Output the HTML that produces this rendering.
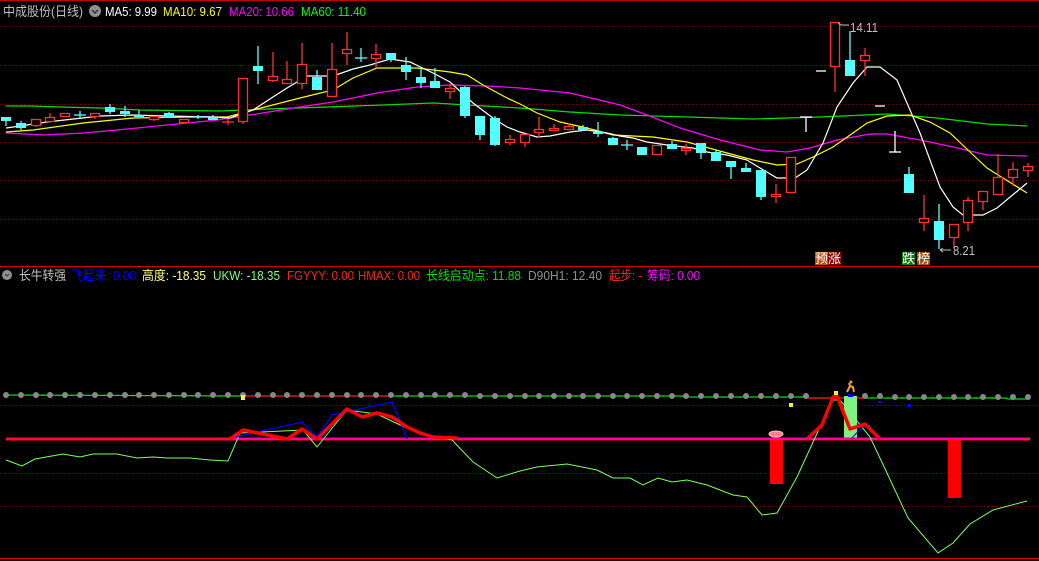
<!DOCTYPE html>
<html><head><meta charset="utf-8"><style>
html,body{margin:0;padding:0;background:#000;width:1039px;height:561px;overflow:hidden}
svg{display:block}
text{font-family:"Liberation Sans","Noto Sans CJK SC",sans-serif;font-size:13px}
</style></head><body>
<svg width="1039" height="561" viewBox="0 0 1039 561" xmlns="http://www.w3.org/2000/svg">
<rect width="1039" height="561" fill="#000"/>
<line x1="0" y1="0.5" x2="1039" y2="0.5" stroke="#c00000"/>
<line x1="0" y1="266.5" x2="1039" y2="266.5" stroke="#d00000"/>
<line x1="0" y1="558.5" x2="1039" y2="558.5" stroke="#d00000"/>
<g stroke="#800000" stroke-dasharray="1,3">
<line x1="0" y1="26.5" x2="1039" y2="26.5"/><line x1="0" y1="65.5" x2="1039" y2="65.5"/>
<line x1="0" y1="104.5" x2="1039" y2="104.5"/><line x1="0" y1="142.5" x2="1039" y2="142.5"/>
<line x1="0" y1="180.5" x2="1039" y2="180.5"/><line x1="0" y1="219.5" x2="1039" y2="219.5"/>
<line x1="0" y1="405.5" x2="1039" y2="405.5"/><line x1="0" y1="473.5" x2="1039" y2="473.5"/>
<line x1="0" y1="506.5" x2="1039" y2="506.5"/>
</g>
<text x="3" y="16" fill="#c0c0c0" textLength="80" lengthAdjust="spacingAndGlyphs">中成股份(日线)</text>
<circle cx="95" cy="11" r="6" fill="#909090"/><path d="M92 10l3 3 3-3" stroke="#333" stroke-width="1.5" fill="none"/>
<text x="105" y="16" fill="#fff" textLength="52" lengthAdjust="spacingAndGlyphs">MA5: 9.99</text>
<text x="163" y="16" fill="#ffff00" textLength="59" lengthAdjust="spacingAndGlyphs">MA10: 9.67</text>
<text x="229" y="16" fill="#ff00ff" textLength="65" lengthAdjust="spacingAndGlyphs">MA20: 10.66</text>
<text x="301" y="16" fill="#00ff00" textLength="65" lengthAdjust="spacingAndGlyphs">MA60: 11.40</text>
<g fill="none" stroke-width="1.2">
<polyline stroke="#00e000" points="6,106 30,106 60,107 100,108 140,110 220,111 267,109 327,107 383,105 433,103 520,108 570,112 620,115 687,117 753,119 820,117 887,114 937,118 987,124 1027,126"/>
<polyline stroke="#ff00ff" points="6,133 43,135 83,133 117,130 167,125 217,120 250,115 293,108 333,102 377,93 417,87 450,85 487,86 520,88 570,93 620,105 647,115 680,128 720,140 760,150 787,152 810,148 837,140 870,134 887,134 920,140 953,147 987,155 1027,156"/>
<polyline stroke="#ffff00" points="6,132 33,130 83,123 133,118 187,117 227,117 253,110 300,98 333,90 353,78 377,68 417,68 450,72 467,75 483,85 507,98 520,104 537,113 560,122 587,128 613,135 653,137 687,142 727,153 753,160 777,165 797,164 813,157 833,147 853,133 867,123 887,116 910,115 930,122 950,133 970,152 987,168 1003,178 1027,193"/>
<polyline stroke="#ffffff" points="6,128 20,126 47,122 100,116 133,115 167,116 213,117 230,118 253,110 273,97 287,88 307,76 333,76 353,69 370,65 390,59 410,62 433,73 450,82 473,103 493,118 507,127 520,132 537,137 550,136 570,132 587,130 607,133 620,136 633,138 647,142 667,145 693,148 707,152 727,155 747,160 760,168 777,178 795,178 807,170 823,143 837,107 853,83 867,67 880,67 897,80 920,133 940,187 953,207 963,215 983,215 997,208 1027,183"/>
</g>
<g stroke="#54ffff" stroke-width="1.3">
<line x1="6" y1="117" x2="6" y2="126"/><line x1="21" y1="121" x2="21" y2="130"/><line x1="80" y1="111" x2="80" y2="119"/><line x1="74" y1="115" x2="86" y2="115"/>
<line x1="110" y1="104" x2="110" y2="114"/><line x1="125" y1="106" x2="125" y2="117"/><line x1="139" y1="110" x2="139" y2="118"/><line x1="169" y1="112" x2="169" y2="118"/>
<line x1="198" y1="115" x2="198" y2="119"/><line x1="193" y1="117" x2="203" y2="117"/><line x1="213" y1="115" x2="213" y2="120"/>
<line x1="258" y1="46" x2="258" y2="84"/><line x1="317" y1="70" x2="317" y2="90"/><line x1="361" y1="48" x2="361" y2="62"/><line x1="355" y1="58" x2="367" y2="58"/>
<line x1="391" y1="53" x2="391" y2="62"/><line x1="406" y1="57" x2="406" y2="80"/><line x1="421" y1="68" x2="421" y2="88"/><line x1="435" y1="68" x2="435" y2="88"/>
<line x1="465" y1="86" x2="465" y2="118"/><line x1="480" y1="116" x2="480" y2="140"/><line x1="495" y1="116" x2="495" y2="146"/>
<line x1="583" y1="125" x2="583" y2="131"/><line x1="598" y1="122" x2="598" y2="137"/><line x1="613" y1="137" x2="613" y2="145"/>
<line x1="627" y1="140" x2="627" y2="150"/><line x1="621" y1="145" x2="633" y2="145"/><line x1="642" y1="147" x2="642" y2="155"/>
<line x1="672" y1="141" x2="672" y2="149"/><line x1="701" y1="143" x2="701" y2="159"/><line x1="716" y1="150" x2="716" y2="161"/>
<line x1="731" y1="161" x2="731" y2="179"/><line x1="746" y1="163" x2="746" y2="172"/><line x1="761" y1="170" x2="761" y2="200"/>
<line x1="850" y1="31" x2="850" y2="76"/><line x1="909" y1="167" x2="909" y2="193"/><line x1="939" y1="204" x2="939" y2="249"/>
</g>
<g fill="#54ffff">
<rect x="1" y="117" width="10" height="4"/><rect x="16" y="123" width="10" height="5"/><rect x="105" y="107" width="10" height="5"/>
<rect x="120" y="111" width="10" height="3"/><rect x="134" y="115" width="10" height="2"/><rect x="164" y="113" width="10" height="5"/>
<rect x="208" y="117" width="10" height="3"/><rect x="253" y="66" width="10" height="5"/><rect x="312" y="77" width="10" height="13"/>
<rect x="386" y="53" width="10" height="6"/><rect x="401" y="65" width="10" height="7"/><rect x="416" y="77" width="10" height="6"/>
<rect x="430" y="81" width="10" height="7"/><rect x="460" y="87" width="10" height="29"/><rect x="475" y="116" width="10" height="19"/>
<rect x="490" y="118" width="10" height="27"/><rect x="578" y="127" width="10" height="3"/><rect x="593" y="132" width="10" height="2"/>
<rect x="608" y="138" width="10" height="7"/><rect x="637" y="147" width="10" height="8"/><rect x="667" y="144" width="10" height="5"/>
<rect x="696" y="143" width="10" height="10"/><rect x="711" y="152" width="10" height="9"/><rect x="726" y="161" width="10" height="6"/>
<rect x="741" y="168" width="10" height="4"/><rect x="756" y="170" width="10" height="27"/><rect x="845" y="60" width="10" height="16"/>
<rect x="904" y="174" width="10" height="19"/><rect x="934" y="221" width="10" height="19"/>
</g>
<g stroke="#ff3232" stroke-width="1.3">
<line x1="36" y1="119" x2="36" y2="127"/><line x1="50" y1="113" x2="50" y2="122"/><line x1="95" y1="113" x2="95" y2="119"/>
<line x1="154" y1="116" x2="154" y2="121"/><line x1="228" y1="119" x2="228" y2="125"/><line x1="222" y1="122" x2="234" y2="122"/>
<line x1="243" y1="78" x2="243" y2="124"/><line x1="273" y1="52" x2="273" y2="82"/><line x1="287" y1="61" x2="287" y2="84"/>
<line x1="302" y1="43" x2="302" y2="89"/><line x1="332" y1="43" x2="332" y2="97"/><line x1="347" y1="32" x2="347" y2="65"/>
<line x1="376" y1="44" x2="376" y2="68"/><line x1="450" y1="84" x2="450" y2="99"/><line x1="510" y1="135" x2="510" y2="145"/>
<line x1="525" y1="134" x2="525" y2="147"/><line x1="539" y1="117" x2="539" y2="138"/><line x1="554" y1="124" x2="554" y2="131"/>
<line x1="569" y1="123" x2="569" y2="130"/><line x1="686" y1="144" x2="686" y2="155"/><line x1="776" y1="184" x2="776" y2="203"/>
<line x1="835" y1="22" x2="835" y2="92"/><line x1="865" y1="48" x2="865" y2="76"/><line x1="924" y1="195" x2="924" y2="231"/>
<line x1="954" y1="224" x2="954" y2="248"/><line x1="968" y1="197" x2="968" y2="231"/><line x1="983" y1="191" x2="983" y2="210"/>
<line x1="998" y1="154" x2="998" y2="195"/><line x1="1013" y1="162" x2="1013" y2="186"/><line x1="1028" y1="163" x2="1028" y2="177"/>
</g>
<g fill="#000" stroke="#ff3232" stroke-width="1.3">
<rect x="31.5" y="119.5" width="9" height="6"/><rect x="45.5" y="117.5" width="9" height="4"/><rect x="60.5" y="113.5" width="9" height="3"/>
<rect x="90.5" y="113.5" width="9" height="3"/><rect x="149.5" y="116.5" width="9" height="3"/><rect x="179.5" y="119.5" width="9" height="3"/>
<rect x="238.5" y="78.5" width="9" height="43"/><rect x="268.5" y="76.5" width="9" height="4"/><rect x="282.5" y="79.5" width="9" height="4"/>
<rect x="297.5" y="64.5" width="9" height="19"/><rect x="327.5" y="69.5" width="9" height="27"/><rect x="342.5" y="49.5" width="9" height="4"/>
<rect x="371.5" y="54.5" width="9" height="4"/><rect x="445.5" y="88.5" width="9" height="3"/><rect x="505.5" y="139.5" width="9" height="3"/>
<rect x="520.5" y="134.5" width="9" height="8"/><rect x="534.5" y="129.5" width="9" height="3"/><rect x="549.5" y="128.5" width="9" height="2"/>
<rect x="564.5" y="126.5" width="9" height="3"/><rect x="652.5" y="145.5" width="9" height="9"/><rect x="681.5" y="148.5" width="9" height="2"/>
<rect x="771.5" y="194.5" width="9" height="2"/><rect x="786.5" y="157.5" width="9" height="35"/><rect x="830.5" y="22.5" width="9" height="44"/>
<rect x="860.5" y="55.5" width="9" height="5"/><rect x="919.5" y="218.5" width="9" height="4"/><rect x="949.5" y="224.5" width="9" height="13"/>
<rect x="963.5" y="200.5" width="9" height="22"/><rect x="978.5" y="191.5" width="9" height="10"/><rect x="993.5" y="177.5" width="9" height="17"/>
<rect x="1008.5" y="169.5" width="9" height="8"/><rect x="1023.5" y="166.5" width="9" height="4"/>
</g>
<g stroke="#fff" stroke-width="1.3">
<line x1="806" y1="117" x2="806" y2="132"/><line x1="800" y1="117" x2="812" y2="117"/>
<line x1="816" y1="71" x2="826" y2="71"/><line x1="875" y1="106" x2="885" y2="106"/>
<line x1="895" y1="131" x2="895" y2="152"/><line x1="889" y1="152" x2="901" y2="152"/>
</g>
<text x="850" y="32" fill="#c0c0c0" font-size="12" textLength="28" lengthAdjust="spacingAndGlyphs">14.11</text>
<path d="M838 23l3 2h8" stroke="#c0c0c0" fill="none"/>
<text x="953" y="255" fill="#c0c0c0" font-size="12" textLength="22" lengthAdjust="spacingAndGlyphs">8.21</text>
<path d="M940 250h11M940 250l3-2M940 250l3 2" stroke="#c0c0c0" fill="none"/>
<rect x="815" y="252" width="13" height="13" fill="#b8500f"/><rect x="828" y="252" width="13" height="13" fill="#8b0000"/>
<text x="815" y="263" fill="#fff" font-size="12" textLength="26" lengthAdjust="spacingAndGlyphs">预涨</text>
<rect x="902" y="252" width="13" height="13" fill="#0a7a0a"/><rect x="917" y="252" width="13" height="13" fill="#8b4a10"/>
<text x="902" y="263" fill="#fff" font-size="12">跌</text><text x="917" y="263" fill="#fff" font-size="12">榜</text>
<circle cx="7" cy="275" r="5" fill="#909090"/><path d="M5 274l2 2 2-2" stroke="#333" fill="none"/>
<g font-size="12">
<text x="19" y="280" fill="#c0c0c0" textLength="47" lengthAdjust="spacingAndGlyphs">长牛转强</text>
<text x="71" y="280" fill="#0000ff" textLength="65" lengthAdjust="spacingAndGlyphs">飞起来: 0.00</text>
<text x="142" y="280" fill="#ffff80" textLength="64" lengthAdjust="spacingAndGlyphs">高度: -18.35</text>
<text x="213" y="280" fill="#80ff80" textLength="67" lengthAdjust="spacingAndGlyphs">UKW: -18.35</text>
<text x="287" y="280" fill="#ff2020" textLength="67" lengthAdjust="spacingAndGlyphs">FGYYY: 0.00</text>
<text x="358" y="280" fill="#ff2020" textLength="62" lengthAdjust="spacingAndGlyphs">HMAX: 0.00</text>
<text x="426" y="280" fill="#00e000" textLength="95" lengthAdjust="spacingAndGlyphs">长线启动点: 11.88</text>
<text x="528" y="280" fill="#909090" textLength="74" lengthAdjust="spacingAndGlyphs">D90H1: 12.40</text>
<text x="609" y="280" fill="#ff2020" textLength="33" lengthAdjust="spacingAndGlyphs">起步: -</text>
<text x="647" y="280" fill="#ff00ff" textLength="53" lengthAdjust="spacingAndGlyphs">筹码: 0.00</text>
</g>
<g fill="none">
<polyline stroke="#00e000" stroke-width="1.2" points="6,395 243,396"/>
<polyline stroke="#ff2020" stroke-width="1.2" points="243,396 392,396"/>
<polyline stroke="#00e000" stroke-width="1.2" points="392,396 680,396 685,397 807,397"/>
<polyline stroke="#ff2020" stroke-width="1.2" points="807,398 865,398"/>
<polyline stroke="#00e000" stroke-width="1.2" points="865,398 1005,398 1008,399 1028,399"/>
</g>
<g fill="#888">
<circle cx="6" cy="395" r="3"/><circle cx="21" cy="395" r="3"/><circle cx="36" cy="395" r="3"/><circle cx="50" cy="395" r="3"/><circle cx="65" cy="395" r="3"/><circle cx="80" cy="395" r="3"/><circle cx="95" cy="395" r="3"/><circle cx="110" cy="395" r="3"/><circle cx="125" cy="395" r="3"/><circle cx="139" cy="395" r="3"/><circle cx="154" cy="395" r="3"/><circle cx="169" cy="395" r="3"/><circle cx="184" cy="395" r="3"/><circle cx="198" cy="395" r="3"/><circle cx="213" cy="395" r="3"/><circle cx="228" cy="395" r="3"/><circle cx="243" cy="395" r="3"/><circle cx="258" cy="395" r="3"/><circle cx="273" cy="395" r="3"/><circle cx="287" cy="395" r="3"/><circle cx="302" cy="395" r="3"/><circle cx="317" cy="395" r="3"/><circle cx="332" cy="395" r="3"/><circle cx="347" cy="395" r="3"/><circle cx="361" cy="395" r="3"/><circle cx="376" cy="395" r="3"/><circle cx="391" cy="395" r="3"/><circle cx="406" cy="395" r="3"/><circle cx="421" cy="395" r="3"/><circle cx="435" cy="395" r="3"/><circle cx="450" cy="395" r="3"/><circle cx="465" cy="395" r="3"/><circle cx="480" cy="396" r="3"/><circle cx="495" cy="396" r="3"/><circle cx="510" cy="396" r="3"/><circle cx="525" cy="396" r="3"/><circle cx="539" cy="396" r="3"/><circle cx="554" cy="396" r="3"/><circle cx="569" cy="396" r="3"/><circle cx="583" cy="396" r="3"/><circle cx="598" cy="396" r="3"/><circle cx="613" cy="396" r="3"/><circle cx="627" cy="396" r="3"/><circle cx="642" cy="396" r="3"/><circle cx="657" cy="396" r="3"/><circle cx="672" cy="396" r="3"/><circle cx="686" cy="396" r="3"/><circle cx="701" cy="396" r="3"/><circle cx="716" cy="396" r="3"/><circle cx="731" cy="396" r="3"/><circle cx="746" cy="396" r="3"/><circle cx="761" cy="396" r="3"/><circle cx="776" cy="396" r="3"/><circle cx="791" cy="396" r="3"/><circle cx="806" cy="396" r="3"/><circle cx="865" cy="396" r="3"/><circle cx="880" cy="396" r="3"/><circle cx="895" cy="397" r="3"/><circle cx="909" cy="397" r="3"/><circle cx="924" cy="397" r="3"/><circle cx="939" cy="397" r="3"/><circle cx="954" cy="397" r="3"/><circle cx="968" cy="397" r="3"/><circle cx="983" cy="397" r="3"/><circle cx="998" cy="397" r="3"/><circle cx="1013" cy="397" r="3"/><circle cx="1028" cy="397" r="3"/>
</g>
<rect x="844" y="396" width="13" height="43" fill="#80f080"/>
<rect x="770" y="439" width="13" height="45" fill="#ff0000"/>
<rect x="948" y="439" width="13" height="59" fill="#ff0000"/>
<line x1="6" y1="439" x2="1030" y2="439" stroke="#ff0a2a" stroke-width="3"/>
<line x1="230" y1="439" x2="1030" y2="439" stroke="#ff00ff" stroke-width="1"/>
<polyline fill="none" stroke="#80ff60" stroke-width="1" points="6,460 22,466 35,459 63,454 80,457 93,454 117,454 137,458 153,457 167,458 190,458 210,460 228,461 240,433 303,430 317,447 333,427 347,410 377,414 400,425 420,434 452,440 473,462 497,478 520,471 537,467 567,464 597,470 613,478 630,478 643,485 658,478 672,482 687,480 707,485 733,495 747,497 762,515 777,513 797,477 820,427 832,400 840,400 870,437 887,473 908,518 938,553 953,543 970,524 993,510 1027,501"/>
<polyline fill="none" stroke="#0000ff" stroke-width="1.2" points="230,438 253,433 302,422 317,437 332,415 392,402 407,439"/>
<polyline fill="none" stroke="#0000ff" stroke-width="1" points="851,439 865,424"/>
<polyline fill="none" stroke="#ff0000" stroke-width="3.5" stroke-linejoin="round" points="230,439 243,430 287,439 302,429 317,439 347,409 362,417 377,413 392,417 407,427 420,433 433,437 457,438"/>
<polyline fill="none" stroke="#ff0000" stroke-width="3.5" stroke-linejoin="round" points="807,439 822,425 833,397 837,396 850,429 865,424 880,439"/>
<ellipse cx="776" cy="434" rx="7" ry="3" fill="#ff8080" stroke="#ffc0c0"/>
<path d="M847 392l3-6 3 1 1 5M850 386l-1-3" stroke="#f0a040" stroke-width="2" fill="none"/><circle cx="851" cy="382" r="1.5" fill="#f0a040"/>
<rect x="241" y="395" width="4" height="5" fill="#ffff00"/>
<rect x="789" y="403" width="4" height="4" fill="#ffff00"/>
<rect x="834" y="391" width="4" height="4" fill="#ffff00"/>
<rect x="848" y="394" width="5" height="3" fill="#0000ff"/>
<rect x="878" y="401" width="4" height="2" fill="#0000ff"/>
<rect x="907" y="404" width="4" height="3" fill="#0000ff"/>
</svg>
</body></html>
